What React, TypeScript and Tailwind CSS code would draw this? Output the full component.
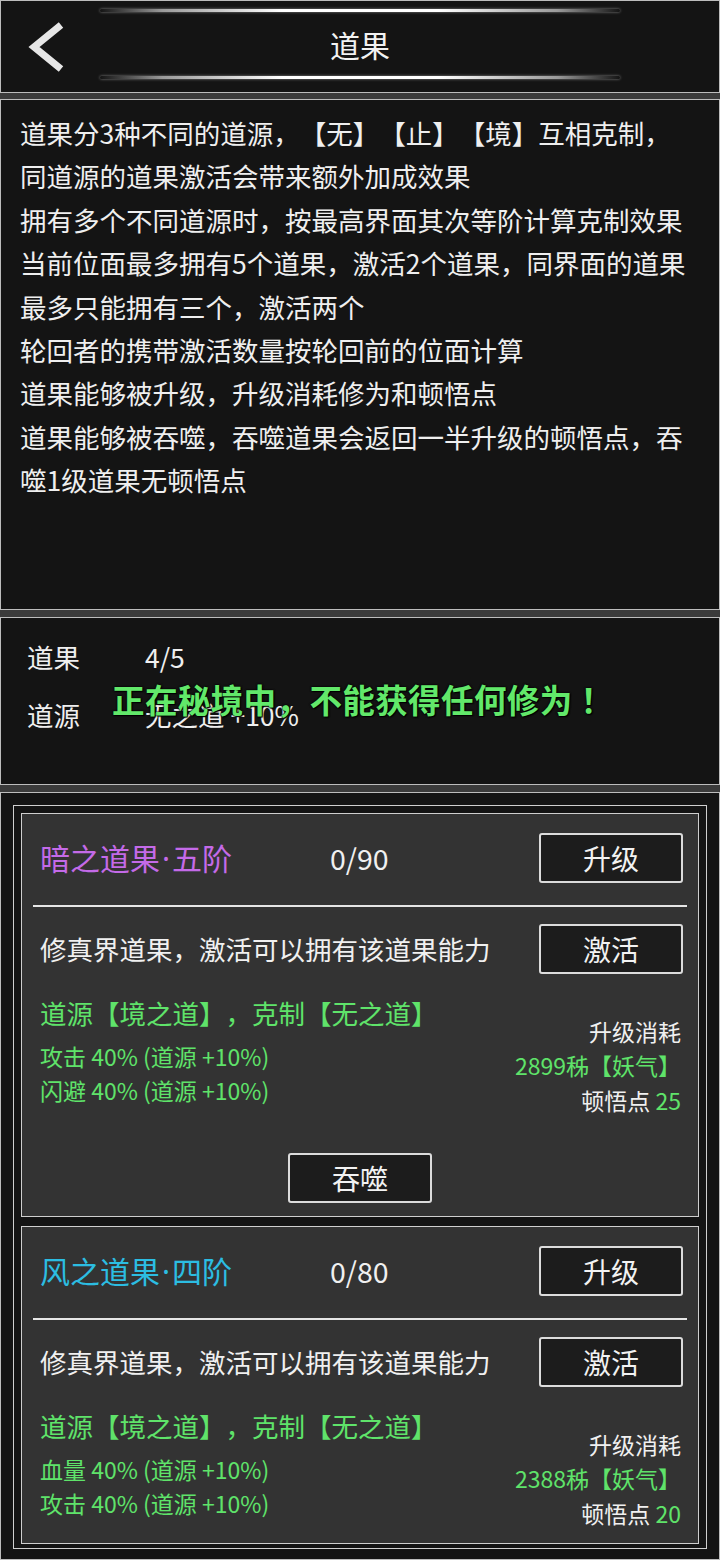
import React from "react"

type Fruit = {
  name: string
  grade: string
  color: string
  progress: string
  stats: string[]
  cost: string
  insight: number
  devour?: boolean
}

const FONT = { fontFamily: '"Noto Sans CJK SC", "Noto Sans", sans-serif' }

const RULES = [
  "道果分3种不同的道源，【无】【止】【境】互相克制，",
  "同道源的道果激活会带来额外加成效果",
  "拥有多个不同道源时，按最高界面其次等阶计算克制效果",
  "当前位面最多拥有5个道果，激活2个道果，同界面的道果",
  "最多只能拥有三个，激活两个",
  "轮回者的携带激活数量按轮回前的位面计算",
  "道果能够被升级，升级消耗修为和顿悟点",
  "道果能够被吞噬，吞噬道果会返回一半升级的顿悟点，吞",
  "噬1级道果无顿悟点",
]

const FRUITS: Fruit[] = [
  {
    name: "暗之道果",
    grade: "五阶",
    color: "text-[#c46ae8]",
    progress: "0/90",
    stats: ["攻击 40% (道源 +10%)", "闪避 40% (道源 +10%)"],
    cost: "2899秭【妖气】",
    insight: 25,
    devour: true,
  },
  {
    name: "风之道果",
    grade: "四阶",
    color: "text-[#2cbde2]",
    progress: "0/80",
    stats: ["血量 40% (道源 +10%)", "攻击 40% (道源 +10%)"],
    cost: "2388秭【妖气】",
    insight: 20,
  },
]

function Btn({ label }: { label: string }) {
  return (
    <div className="w-[144px] h-[50px] shrink-0 rounded-[3px] border-2 border-[#dcdcdc] bg-[#1c1c1c] flex items-center justify-center text-[28px] text-[#f2f2f2]">
      {label}
    </div>
  )
}

function FruitCard({ fruit }: { fruit: Fruit }) {
  return (
    <div className="border border-[#cfcfcf] bg-[#333333] pb-[13px]">
      <div className="flex items-center pt-[19px] pl-[18px] pr-[15px]">
        <span className={`w-[290px] text-[30px] ${fruit.color}`}>
          {fruit.name}
          <span className="font-['Noto_Sans'] px-[2px]">·</span>
          {fruit.grade}
        </span>
        <span className="flex-1 text-[28.5px] text-[#f0f0f0]">{fruit.progress}</span>
        <Btn label="升级" />
      </div>
      <div className="mx-[11px] mt-[22px] h-[1.5px] bg-[#e6e6e6]" />
      <div className="flex items-center justify-between pt-[17px] pl-[18px] pr-[15px]">
        <span className="text-[26.5px] text-[#f0f0f0]">修真界道果，激活可以拥有该道果能力</span>
        <Btn label="激活" />
      </div>
      <div className="flex items-start justify-between mt-[21px] pl-[18px] pr-[17px]">
        <div className="text-[#5fe36a]">
          <div className="text-[26.5px] leading-[36px]">道源【境之道】，克制【无之道】</div>
          <div className="mt-[8px] text-[23px] leading-[34px]">
            {fruit.stats.map((s) => (
              <div key={s}>{s}</div>
            ))}
          </div>
        </div>
        <div className="pt-[19px] text-right text-[23px] leading-[34.5px]">
          <div className="text-[#f0f0f0]">升级消耗</div>
          <div className="text-[#5fe36a]">{fruit.cost}</div>
          <div className="text-[#f0f0f0]">
            顿悟点 <span className="text-[#5fe36a]">{fruit.insight}</span>
          </div>
        </div>
      </div>
      {fruit.devour && (
        <div className="flex justify-center mt-[36px]">
          <Btn label="吞噬" />
        </div>
      )}
    </div>
  )
}

function GlowLine() {
  return (
    <div className="mx-auto w-[520px] h-[3px] rounded-full bg-[linear-gradient(90deg,transparent,#9a9a9a_12%,#ffffff_35%,#ffffff_65%,#9a9a9a_88%,transparent)] shadow-[0_0_3px_rgba(255,255,255,0.5)]" />
  )
}

export default function App() {
  return (
    <div
      className="w-[720px] h-[1560px] bg-[#3b3b3b] flex flex-col overflow-hidden [text-spacing-trim:space-all]"
      style={FONT}
    >
      {/* header */}
      <div className="relative h-[93px] shrink-0 border border-[#bdbdbd] bg-[#141414] pt-[8px]">
        <GlowLine />
        <div className="flex items-center justify-center h-[64px] text-[30px] text-[#f2f2f2]">道果</div>
        <GlowLine />
        <svg className="absolute left-[24px] top-[18px]" width="44" height="56" viewBox="0 0 44 56">
          <path d="M36 6 L9 28 L36 50" fill="none" stroke="#e6e6e6" strokeWidth="7" strokeLinejoin="miter" />
        </svg>
      </div>

      {/* rules */}
      <div className="mt-[6px] h-[511px] shrink-0 border border-[#bdbdbd] bg-[#141414] pl-[19px] pt-[11px] text-[26.5px] leading-[43.4px] text-[#efefef]">
        {RULES.map((line) => (
          <div key={line} className="whitespace-nowrap">{line}</div>
        ))}
      </div>

      {/* status */}
      <div className="relative mt-[7px] h-[168px] shrink-0 border border-[#bdbdbd] bg-[#141414] pl-[26px] pt-[10px] text-[26.5px] leading-[58px] text-[#efefef]">
        <div className="flex">
          <span className="w-[118px]">道果</span>
          <span>4/5</span>
        </div>
        <div className="flex">
          <span className="w-[118px]">道源</span>
          <span>无之道 +10%</span>
        </div>
        <div className="absolute left-[111px] top-[59px] whitespace-nowrap text-[32.5px] leading-[44px] font-bold tracking-[0.4px] text-[#62e86a] [text-shadow:0_0_2px_#000,0_0_2px_#000,1px_1px_1px_#000]">
          正在秘境中，不能获得任何修为 ！
        </div>
      </div>

      {/* list */}
      <div className="mt-[7px] flex-1 border border-[#bdbdbd] bg-[#141414] px-[12px] pt-[12px] pb-[10px]">
        <div className="h-full overflow-hidden border border-[#cfcfcf] bg-[#141414] px-[7px] pt-[7px] flex flex-col gap-[9px]">
          {FRUITS.map((f) => (
            <FruitCard key={f.name} fruit={f} />
          ))}
        </div>
      </div>
    </div>
  )
}
